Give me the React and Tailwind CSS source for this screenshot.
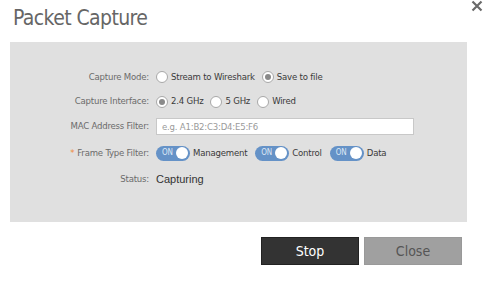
import React from "react";

const Radio = ({ checked, label }) => (
  <span className="flex items-center gap-[3px]">
    <span className="w-[12px] h-[12px] rounded-full border border-[#a8a8a8] bg-white flex items-center justify-center">
      {checked && <span className="w-[6px] h-[6px] rounded-full bg-[#8a8a8a]" />}
    </span>
    <span>{label}</span>
  </span>
);

const Toggle = ({ label }) => (
  <span className="flex items-center gap-[3px]">
    <span className="w-[34px] h-[15px] rounded-full bg-[#6592c7] flex items-center justify-between pl-[6px] pr-[2px]">
      <span className="text-[8px] text-[#dde8f5] leading-none">ON</span>
      <span className="w-[12px] h-[12px] rounded-full bg-white" />
    </span>
    <span>{label}</span>
  </span>
);

const Row = ({ label, required, children, h }) => (
  <div className={`flex items-center ${h}`}>
    <div className="w-[139px] text-right text-[#6b6b6b]">
      {required && <span className="text-[#f08a3c] mr-[3px]">*</span>}
      {label}
    </div>
    <div className="ml-[7px] flex items-center gap-[7px] text-[#3a3a3a]">{children}</div>
  </div>
);

export default function App() {
  return (
    <div className="w-[490px] h-[281px] bg-white relative" style={{ fontFamily: "'DejaVu Sans Condensed', 'DejaVu Sans', sans-serif" }}>
      <button className="absolute left-[471px] top-[0px] w-[12px] h-[12px]">
        <svg viewBox="0 0 12 12" className="w-[12px] h-[12px]">
          <path d="M1.5 1.5 L10.5 10.5 M10.5 1.5 L1.5 10.5" stroke="#6a6a6a" strokeWidth="2.2" />
        </svg>
      </button>
      <h1 className="pl-[13px] pt-[3px] h-[42px] text-[21px] tracking-[-0.6px] text-[#666]">
        Packet Capture
      </h1>
      <div className="mx-[10px] w-[457px] h-[180px] bg-[#e0e0e0] pt-[23px] text-[9.5px] tracking-[-0.2px]">
        <Row label="Capture Mode:" h="h-[24px]">
          <Radio label="Stream to Wireshark" />
          <Radio checked label="Save to file" />
        </Row>
        <Row label="Capture Interface:" h="h-[25px]">
          <Radio checked label="2.4 GHz" />
          <Radio label="5 GHz" />
          <Radio label="Wired" />
        </Row>
        <Row label="MAC Address Filter:" h="h-[25px]">
          <input
            className="w-[258px] h-[17px] bg-white border border-[#c8c8c8] px-[5px] text-[9.5px] placeholder-[#9a9a9a] outline-none"
            placeholder="e.g. A1:B2:C3:D4:E5:F6"
          />
        </Row>
        <Row label="Frame Type Filter:" required h="h-[28px]">
          <span className="flex items-center gap-[8px]">
            <Toggle label="Management" />
            <Toggle label="Control" />
            <Toggle label="Data" />
          </span>
        </Row>
        <Row label="Status:" h="h-[24px]">
          <span className="text-[11px] tracking-normal text-[#333]" style={{ fontFamily: "'Liberation Sans', sans-serif" }}>Capturing</span>
        </Row>
      </div>
      <div className="flex justify-end gap-[5px] pr-[28px] pt-[15px]">
        <button className="w-[98px] h-[28px] bg-[#333333] text-white text-[14px] border border-[#222]">Stop</button>
        <button className="w-[98px] h-[28px] bg-[#a0a0a0] text-[#555] text-[14px] border border-[#999]">Close</button>
      </div>
    </div>
  );
}
